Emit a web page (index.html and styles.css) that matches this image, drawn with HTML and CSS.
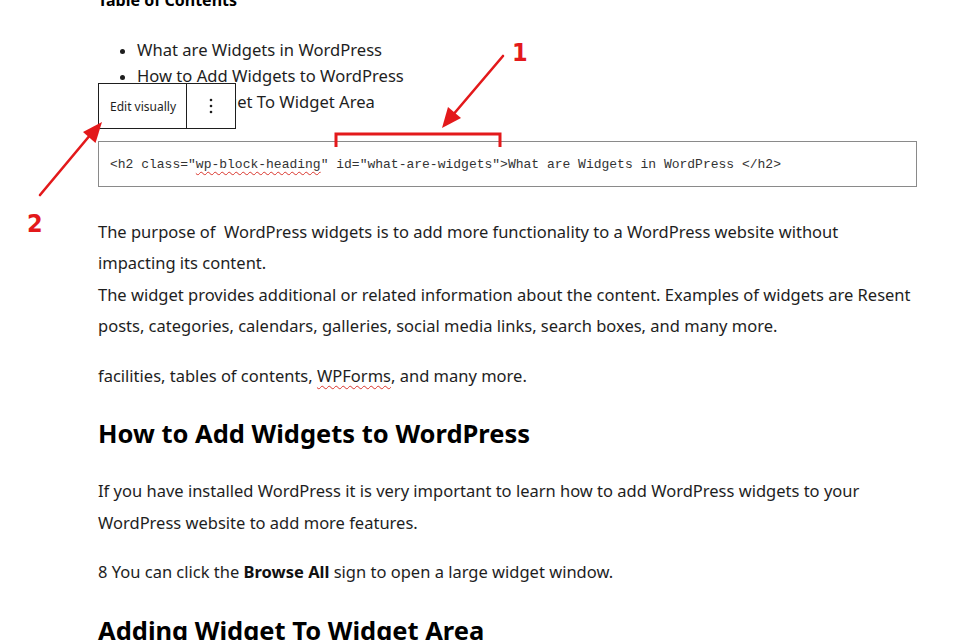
FILE: index.html
```html
<!DOCTYPE html>
<html lang="en">
<head>
<meta charset="utf-8">
<title>Widgets in WordPress</title>
<link rel="stylesheet" href="styles.css">
</head>
<body>
<main class="page">
  <p class="toc-title">Table of Contents</p>
  <ul class="toc">
    <li>What are Widgets in WordPress</li>
    <li>How to Add Widgets to WordPress</li>
    <li>Adding Widget To Widget Area</li>
  </ul>

  <div class="html-block">
    <div class="block-toolbar">
      <button class="tb-edit">Edit visually</button>
      <button class="tb-more" aria-label="Options">
        <svg width="4" height="16" viewBox="0 0 4 16"><circle cx="2" cy="2" r="1.3"/><circle cx="2" cy="8" r="1.3"/><circle cx="2" cy="14" r="1.3"/></svg>
      </button>
    </div>
    <code class="html-code">&lt;h2 class="<span class="spell">wp-block-heading</span>" id="what-are-widgets"&gt;What are Widgets in WordPress &lt;/h2&gt;</code>
  </div>

  <p class="para">The purpose of &nbsp;WordPress widgets is to add more functionality to a WordPress website without impacting its content.<br>The widget provides additional or related information about the content. Examples of widgets are Resent posts, categories, calendars, galleries, social media links, search boxes, and many more.</p>
  <p class="para">facilities, tables of contents, <span class="spell">WPForms</span>, and many more.</p>

  <h2 class="heading">How to Add Widgets to WordPress</h2>
  <p class="para">If you have installed WordPress it is very important to learn how to add WordPress widgets to your WordPress website to add more features.</p>
  <p class="para">8 You can click the <strong>Browse All</strong> sign to open a large widget window.</p>

  <h2 class="heading">Adding Widget To Widget Area</h2>
</main>

<svg class="annotations" width="960" height="640" viewBox="0 0 960 640" aria-hidden="true">
  <g stroke="#e3191b" fill="none" stroke-width="2.6" stroke-linecap="round">
    <path d="M336 147 V134 H500 V147" stroke-width="3" stroke-linecap="butt"/>
    <path d="M503 56 L452 116"/>
    <path d="M40 195 L91 134"/>
  </g>
  <g fill="#e3191b">
    <polygon points="442,128 461,118 448,107"/>
    <polygon points="102,122 95.5,143 83,132"/>
  </g>
  <text class="ann-num" x="512" y="61">1</text>
  <text class="ann-num" x="27" y="232">2</text>
</svg>
</body>
</html>
```
FILE: styles.css
```css
html, body {
  margin: 0;
  padding: 0;
  background: #ffffff;
}

body {
  position: relative;
  width: 960px;
  height: 640px;
  overflow: hidden;
  font-family: "Noto Sans", "Open Sans", sans-serif;
  color: #1e1e1e;
}

.page {
  width: 819px;
  margin-left: 98px;
  margin-top: -13px;
}

.toc-title {
  margin: 0;
  font-size: 16px;
  font-weight: 700;
  line-height: 26px;
  color: #000;
}

.toc {
  margin: 24px 0 0;
  padding-left: 39px;
  font-size: 16.6px;
  line-height: 26px;
}

.toc li::marker {
  font-size: 15px;
}

.html-block {
  position: relative;
  margin-top: 26px;
  border: 1px solid #8a8a8a;
  height: 44px;
  display: flex;
  align-items: center;
  padding: 0 11px;
}

.html-code {
  font-family: "Liberation Mono", "DejaVu Sans Mono", monospace;
  font-size: 13px;
  color: #333;
  white-space: pre;
}

.spell {
  text-decoration: underline wavy #d9342b;
  text-decoration-thickness: 1px;
  text-underline-offset: 3px;
}

.block-toolbar {
  position: absolute;
  left: -1px;
  top: -59px;
  height: 46px;
  display: flex;
  border: 1px solid #1e1e1e;
  background: #fff;
  box-sizing: border-box;
}

.block-toolbar button {
  font-family: inherit;
  background: #fff;
  border: 0;
  margin: 0;
  color: #1e1e1e;
  display: flex;
  align-items: center;
}

.tb-edit {
  width: 88px;
  padding: 0 0 0 11px;
  font-size: 12px;
  border-right: 1px solid #1e1e1e !important;
}

.tb-more {
  width: 48px;
  justify-content: center;
  padding: 0;
}

.tb-more svg {
  fill: #1e1e1e;
}

.para {
  margin: 18.5px 0 0;
  font-size: 16.5px;
  line-height: 31.35px;
}

.html-block + .para {
  margin-top: 29px;
}

.para strong {
  font-weight: 700;
  color: #111;
}

.heading {
  margin: 27px 0 0;
  font-size: 25.5px;
  line-height: 33px;
  font-weight: 700;
  color: #000;
}

.heading + .para {
  margin-top: 25px;
}

.para + .heading {
  margin-top: 26px;
}

.annotations {
  position: absolute;
  left: 0;
  top: 0;
  pointer-events: none;
}

.ann-num {
  font-family: "Liberation Sans Narrow", "DejaVu Sans Condensed", sans-serif;
  font-weight: 700;
  font-size: 25px;
  fill: #e3191b;
}
```
